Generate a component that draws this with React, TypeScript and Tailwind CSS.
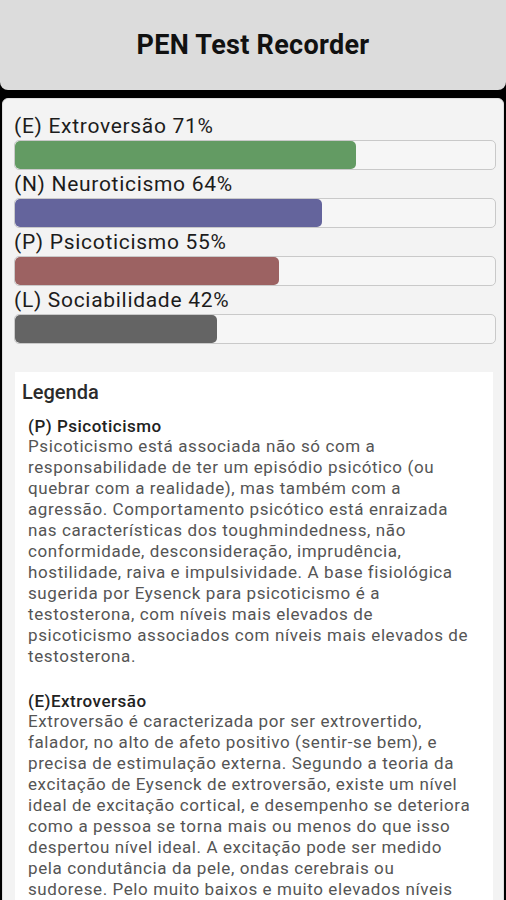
import React from "react"

const scores = [
  { label: "(E) Extroversão 71%", value: 71, color: "bg-[#639b63]" },
  { label: "(N) Neuroticismo 64%", value: 64, color: "bg-[#64649c]" },
  { label: "(P) Psicoticismo 55%", value: 55, color: "bg-[#9c6262]" },
  { label: "(L) Sociabilidade 42%", value: 42, color: "bg-[#646464]" },
]

const legend = [
  {
    title: "(P) Psicoticismo",
    lines: [
      "Psicoticismo está associada não só com a",
      "responsabilidade de ter um episódio psicótico (ou",
      "quebrar com a realidade), mas também com a",
      "agressão. Comportamento psicótico está enraizada",
      "nas características dos toughmindedness, não",
      "conformidade, desconsideração, imprudência,",
      "hostilidade, raiva e impulsividade. A base fisiológica",
      "sugerida por Eysenck para psicoticismo é a",
      "testosterona, com níveis mais elevados de",
      "psicoticismo associados com níveis mais elevados de",
      "testosterona.",
    ],
  },
  {
    title: "(E)Extroversão",
    lines: [
      "Extroversão é caracterizada por ser extrovertido,",
      "falador, no alto de afeto positivo (sentir-se bem), e",
      "precisa de estimulação externa. Segundo a teoria da",
      "excitação de Eysenck de extroversão, existe um nível",
      "ideal de excitação cortical, e desempenho se deteriora",
      "como a pessoa se torna mais ou menos do que isso",
      "despertou nível ideal. A excitação pode ser medido",
      "pela condutância da pele, ondas cerebrais ou",
      "sudorese. Pelo muito baixos e muito elevados níveis",
    ],
  },
]

const ScoreBar = ({ label, value, color }: { label: string; value: number; color: string }) => (
  <div>
    <div className="h-[28px] leading-[28px] text-[21px] tracking-[0.7px] text-[#1c1c1c]">{label}</div>
    <div className="h-[30px] rounded-[5px] border border-[#c9c9c9] bg-[#f6f6f6] overflow-hidden">
      <div className={`h-full rounded-[5px] ${color}`} style={{ width: `${value}%` }} />
    </div>
  </div>
)

export default function App() {
  return (
    <div className="w-[506px] h-[900px] bg-black overflow-hidden flex flex-col font-['Roboto',sans-serif]">
      <header className="h-[90px] shrink-0 bg-[#dcdcdc] rounded-b-[8px] flex items-center justify-center">
        <h1 className="text-[27px] font-bold tracking-[0.3px] text-[#111]">PEN Test Recorder</h1>
      </header>

      <main className="mt-[8px] mx-[2px] flex-1 bg-[#f3f3f3] rounded-t-[6px] border border-[#dedede] pl-[11px] pr-[7px] pt-[13px]">
        {scores.map((s) => (
          <ScoreBar key={s.label} {...s} />
        ))}

        <section className="mt-[28px] ml-[1px] mr-[3px] bg-white pl-[7px] pr-[6px] pt-[6px]">
          <h2 className="text-[20px] font-medium text-[#2b2b2b] leading-[28px]">Legenda</h2>
          <div className="pl-[6px] pt-[10px]">
            {legend.map((item) => (
              <div key={item.title} className="mb-[24px]">
                <div className="text-[17px] font-medium tracking-[0.5px] text-[#222] leading-[20px]">{item.title}</div>
                {item.lines.map((line) => (
                  <div key={line} className="text-[17px] tracking-[0.6px] text-[#555] leading-[21px] whitespace-nowrap">
                    {line}
                  </div>
                ))}
              </div>
            ))}
          </div>
        </section>
      </main>
    </div>
  )
}
